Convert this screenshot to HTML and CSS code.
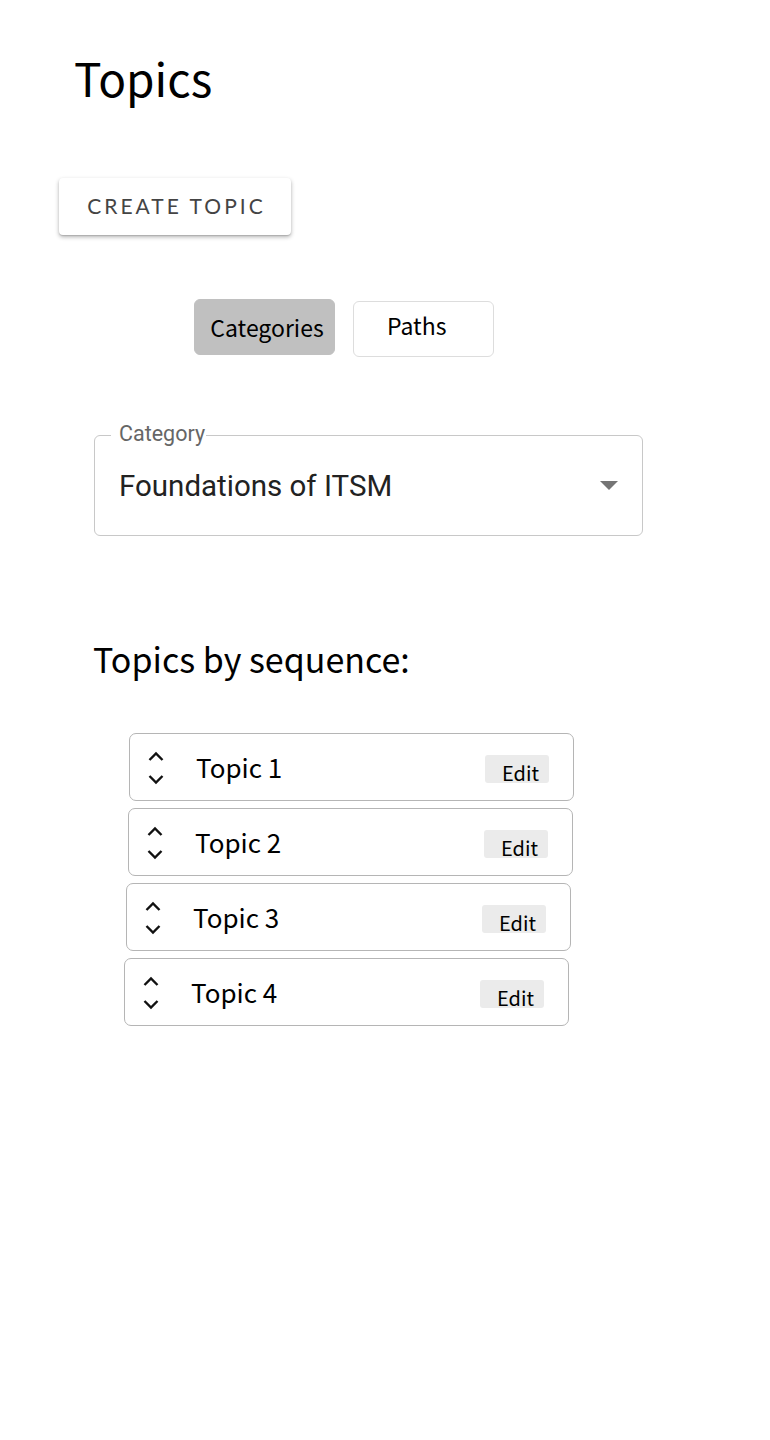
FILE: index.html
```html
<!DOCTYPE html>
<html>
<head>
<meta charset="utf-8">
<link rel="stylesheet" href="styles.css">
</head>
<body>
<div class="page">
  <h1 class="title">Topics</h1>
  <div class="create-row">
    <button class="create-btn">CREATE TOPIC</button>
  </div>
  <div class="toggle">
    <button class="tab tab-active">Categories</button>
    <button class="tab tab-paths">Paths</button>
  </div>
  <div class="select">
    <span class="select-label">Category</span>
    <span class="select-value">Foundations of ITSM</span>
    <svg class="select-arrow" width="18" height="9" viewBox="0 0 18 9"><path d="M0 0 L18 0 L9 9 Z" fill="#757575"/></svg>
  </div>
  <h2 class="seq-title">Topics by sequence:</h2>
  <div class="list">
    <div class="row row1">
      <svg class="chev" width="18" height="34" viewBox="0 0 18 34"><path d="M2.5 9 L9 2.5 L15.5 9" fill="none" stroke="#111" stroke-width="2.4"/><path d="M2.5 25 L9 31.5 L15.5 25" fill="none" stroke="#111" stroke-width="2.4"/></svg>
      <span class="topic">Topic 1</span>
      <span class="edit">Edit</span>
    </div>
    <div class="row row2">
      <svg class="chev" width="18" height="34" viewBox="0 0 18 34"><path d="M2.5 9 L9 2.5 L15.5 9" fill="none" stroke="#111" stroke-width="2.4"/><path d="M2.5 25 L9 31.5 L15.5 25" fill="none" stroke="#111" stroke-width="2.4"/></svg>
      <span class="topic">Topic 2</span>
      <span class="edit">Edit</span>
    </div>
    <div class="row row3">
      <svg class="chev" width="18" height="34" viewBox="0 0 18 34"><path d="M2.5 9 L9 2.5 L15.5 9" fill="none" stroke="#111" stroke-width="2.4"/><path d="M2.5 25 L9 31.5 L15.5 25" fill="none" stroke="#111" stroke-width="2.4"/></svg>
      <span class="topic">Topic 3</span>
      <span class="edit">Edit</span>
    </div>
    <div class="row row4">
      <svg class="chev" width="18" height="34" viewBox="0 0 18 34"><path d="M2.5 9 L9 2.5 L15.5 9" fill="none" stroke="#111" stroke-width="2.4"/><path d="M2.5 25 L9 31.5 L15.5 25" fill="none" stroke="#111" stroke-width="2.4"/></svg>
      <span class="topic">Topic 4</span>
      <span class="edit">Edit</span>
    </div>
  </div>
</div>
</body>
</html>
```
FILE: styles.css
```css
* { box-sizing: border-box; }
html, body { margin: 0; padding: 0; background: #fff; }
body {
  width: 770px;
  height: 1440px;
  font-family: "Noto Sans CJK JP", "Noto Sans", sans-serif;
  color: #000;
}
.page { padding: 47px 0 0 0; }
.title {
  margin: 0 0 0 74px;
  font-size: 46px;
  font-weight: 400;
  line-height: 60px;
}
.create-row { margin: 71px 0 0 59px; }
.create-btn {
  width: 232px;
  height: 57px;
  border: none;
  border-radius: 4px;
  background: #fff;
  box-shadow: 0 2px 4px rgba(0,0,0,0.3), 0 1px 1px rgba(0,0,0,0.12);
  font-family: "Lato", "Liberation Sans", sans-serif;
  font-size: 21px;
  letter-spacing: 3px;
  color: #444;
  padding: 0 0 2px 3px;
}
.toggle {
  display: flex;
  align-items: flex-start;
  gap: 18px;
  margin: 64px 0 0 194px;
}
.tab {
  width: 141px;
  height: 56px;
  border: 1px solid #ddd;
  border-radius: 6px;
  background: #fff;
  font-family: "Noto Sans CJK JP", "Noto Sans", sans-serif;
  font-size: 23px;
  color: #000;
  padding: 0 0 8px 0;
  margin-top: 2px;
}
.tab-paths {
  text-align: left;
  padding-left: 33px;
}
.tab-active {
  background: #c0c0c0;
  border-color: #c0c0c0;
  margin-top: 0;
  padding: 0 0 0 5px;
}
.select {
  position: relative;
  margin: 78px 0 0 94px;
  width: 549px;
  height: 101px;
  border: 1.5px solid #c8c8c8;
  border-radius: 6px;
  display: flex;
  align-items: center;
  padding: 0 24px;
}
.select-label {
  position: absolute;
  left: 16px;
  top: -16px;
  padding: 0 1px 0 8px;
  background: #fff;
  font-family: "Roboto", sans-serif;
  font-size: 21.5px;
  line-height: 28px;
  color: #666;
}
.select-value {
  flex: 1;
  font-family: "Roboto", sans-serif;
  font-size: 29.5px;
  color: #222;
  margin-top: 0;
}
.seq-title {
  margin: 99px 0 0 93px;
  font-size: 34px;
  font-weight: 400;
  line-height: 48px;
}
.list {
  margin: 50px 0 0 0;
  display: flex;
  flex-direction: column;
  gap: 7px;
}
.row {
  width: 445px;
  height: 68px;
  border: 1.5px solid #b5b5b5;
  border-radius: 7px;
  display: flex;
  align-items: center;
  padding: 0 24px 0 17px;
}
.row1 { margin-left: 129px; }
.row2 { margin-left: 128px; }
.row3 { margin-left: 126px; }
.row4 { margin-left: 124px; }
.chev { flex: none; margin-top: 1px; }
.topic {
  flex: 1;
  margin-left: 31px;
  font-size: 26px;
  line-height: 36px;
}
.edit {
  width: 64px;
  height: 28px;
  background: #ebebeb;
  border-radius: 3px;
  font-size: 20px;
  padding: 6px 0 0 17px;
  line-height: 24px;
  overflow: visible;
  margin-top: 4px;
}
```
